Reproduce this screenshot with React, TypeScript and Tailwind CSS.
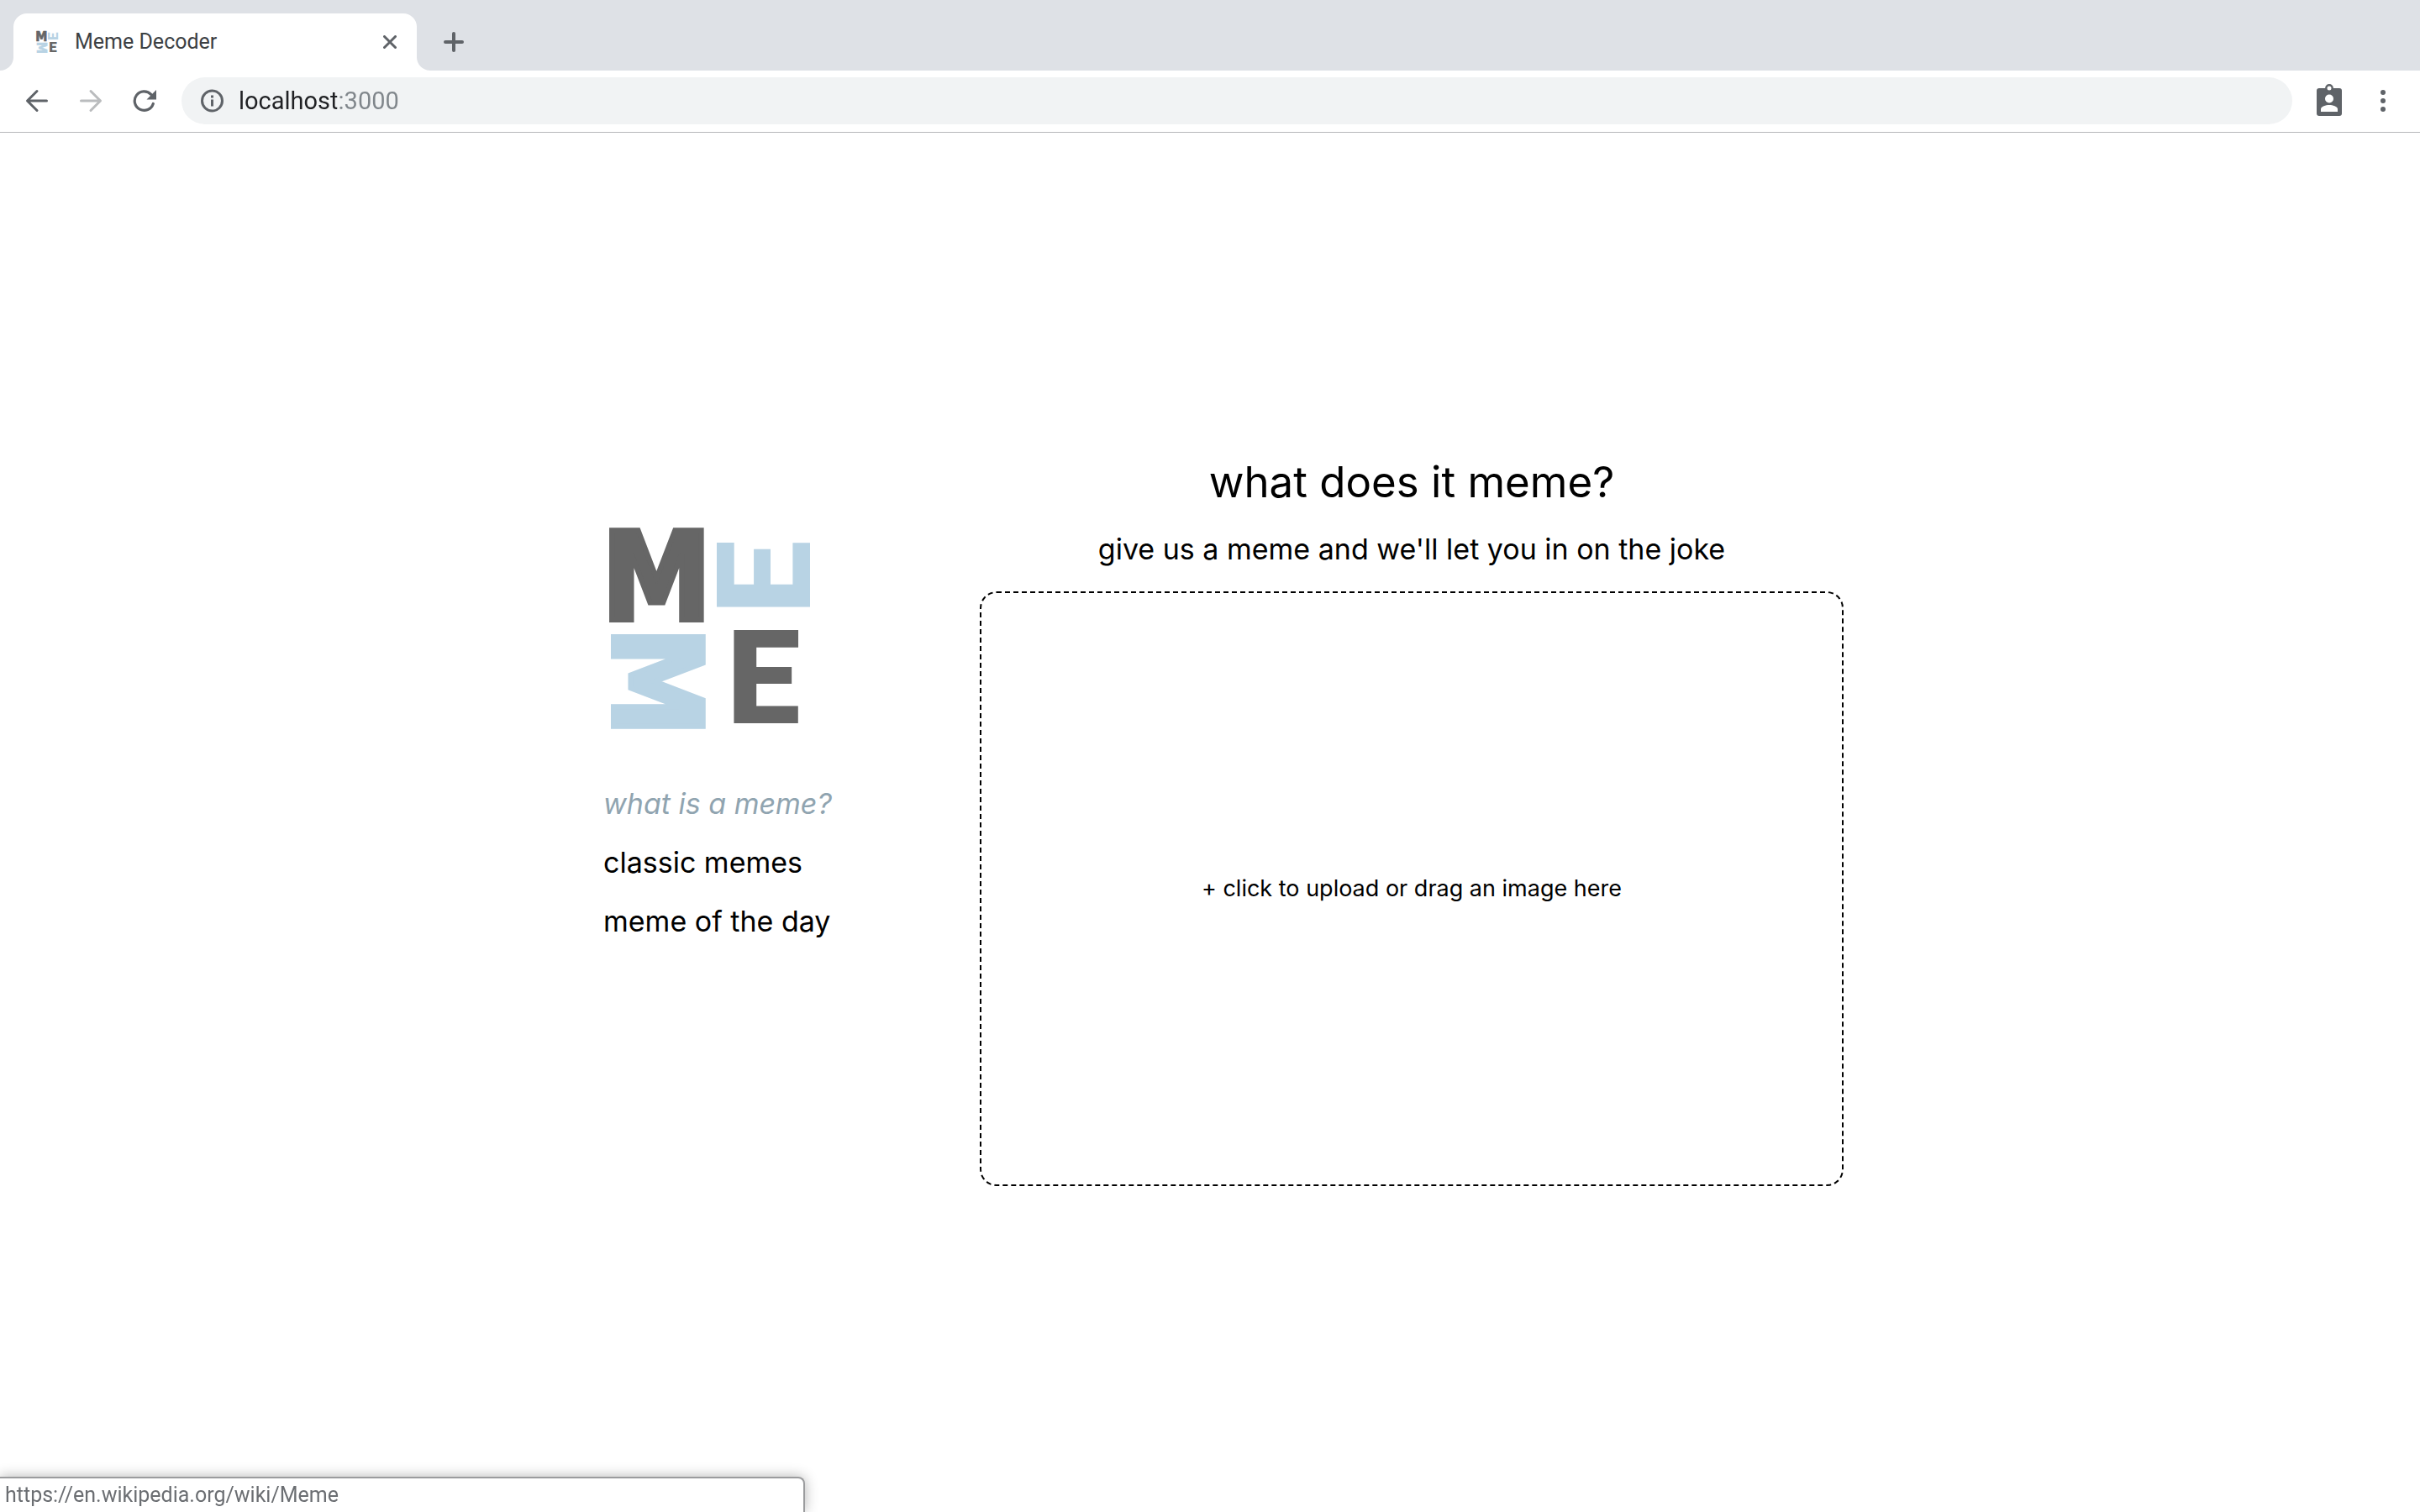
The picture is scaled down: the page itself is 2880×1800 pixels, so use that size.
import { useRef, useState } from 'react';

const links = [
  { label: 'what is a meme?', href: 'https://en.wikipedia.org/wiki/Meme', active: true },
  { label: 'classic memes', href: '#classic' },
  { label: 'meme of the day', href: '#today' },
];

function Logo({ className }: { className?: string }) {
  return (
    <svg viewBox="0 0 240 240" className={`overflow-visible ${className}`} role="img" aria-label="Meme">
      <g fontWeight="900" strokeLinejoin="miter">
        <text x="-8" y="109" fontFamily="DejaVu Sans Condensed" fontWeight="700" fontSize="146" fill="#666" stroke="#666" strokeWidth="6">M</text>
        <text transform="translate(240 96) rotate(-90)" x="-6" y="0" fontFamily="Roboto" fontSize="156" fill="#b8d3e4">E</text>
        <text transform="translate(6 128) rotate(90)" x="-11" y="0" fontFamily="DejaVu Sans Condensed" fontWeight="700" fontSize="146" fill="#b8d3e4" stroke="#b8d3e4" strokeWidth="6">M</text>
        <text x="141" y="232" fontFamily="Roboto" fontSize="156" fill="#666">E</text>
      </g>
    </svg>
  );
}

function TabStrip() {
  return (
    <div className="flex bg-[#dee1e6] pt-4">
      <div className="w-4 bg-white">
        <div className="h-full rounded-br-2xl bg-[#dee1e6]"></div>
      </div>
      <div className="flex h-[68px] w-[480px] items-center rounded-t-2xl bg-white pl-6 pr-4">
        <Logo className="ml-[3px] h-[26px] w-[26px]" />
        <span className="ml-5 flex-1 text-[25px] leading-8 text-[#3c4043]">Meme Decoder</span>
        <button aria-label="Close tab" className="flex h-8 w-8 items-center justify-center">
          <svg viewBox="0 0 16 16" className="h-4 w-4" fill="none" stroke="#5f6368" strokeWidth="3" strokeLinecap="round">
            <path d="M1.5 1.5l13 13M14.5 1.5l-13 13" />
          </svg>
        </button>
      </div>
      <div className="w-4 bg-white">
        <div className="h-full rounded-bl-2xl bg-[#dee1e6]"></div>
      </div>
      <button aria-label="New tab" className="flex h-[68px] w-14 items-center justify-center">
        <svg viewBox="0 0 24 24" className="h-6 w-6" fill="none" stroke="#5f6368" strokeWidth="4" strokeLinecap="round">
          <path d="M12 2v20M2 12h20" />
        </svg>
      </button>
    </div>
  );
}

function Toolbar() {
  const button = 'flex h-14 w-16 items-center justify-center';

  return (
    <div className="flex border-b border-[#b6b7b9] bg-white px-3 pb-[9px] pt-2">
      <button aria-label="Back" className={button}>
        <svg viewBox="0 0 28 28" className="h-7 w-7" fill="none" stroke="#5f6368" strokeWidth="3" strokeLinecap="round" strokeLinejoin="round">
          <path d="M25.500 14H3M14 2.500L2.500 14 14 25.500" />
        </svg>
      </button>
      <button aria-label="Forward" disabled className={button}>
        <svg viewBox="0 0 28 28" className="h-7 w-7" fill="none" stroke="#babcbe" strokeWidth="3" strokeLinecap="round" strokeLinejoin="round">
          <path d="M2.500 14H25M14 2.500L25.500 14 14 25.500" />
        </svg>
      </button>
      <button aria-label="Reload" className={button}>
        <svg viewBox="0 0 28 28" className="h-7 w-7">
          <path d="M24.300 17.500A11.300 11.300 0 1 1 21.700 6.300" fill="none" stroke="#5f6368" strokeWidth="3.200" strokeLinecap="round" />
          <path d="M28 1v11.500H16.500z" fill="#5f6368" />
        </svg>
      </button>
      <div className="mx-3 flex flex-1 items-center rounded-full bg-[#f1f3f4] pl-[22px] pr-6">
        <svg viewBox="0 0 28 28" className="h-7 w-7" fill="none" stroke="#5f6368" strokeWidth="3">
          <circle cx="14.500" cy="14" r="12" />
          <path d="M14.500 12.500v8M14.500 7.500v3" />
        </svg>
        <input
          type="text"
          aria-label="Address"
          defaultValue="localhost:3000"
          className="ml-[18px] flex-1 bg-[linear-gradient(90deg,#202124_117px,#80868b_117px)] bg-clip-text text-[29px] leading-10 text-transparent outline-none"
        />
      </div>
      <button aria-label="Profile" className={button}>
        <svg viewBox="0 0 32 40" className="h-10 w-8">
          <rect x="1" y="5" width="30" height="33" rx="3" fill="#5f6368" />
          <circle cx="16" cy="5" r="3.700" fill="#fff" stroke="#5f6368" strokeWidth="2.400" />
          <circle cx="16" cy="17.500" r="5" fill="#fff" />
          <path d="M6 33v-3c0-3.500 6-5 10-5s10 1.500 10 5v3z" fill="#fff" />
        </svg>
      </button>
      <button aria-label="Menu" className={button}>
        <svg viewBox="0 0 28 28" className="h-7 w-7" fill="#5f6368">
          <circle cx="14" cy="4" r="3" />
          <circle cx="14" cy="14" r="3" />
          <circle cx="14" cy="24" r="3" />
        </svg>
      </button>
    </div>
  );
}

function Uploader() {
  const fileInputRef = useRef<HTMLInputElement>(null);
  const [fileName, setFileName] = useState('');

  return (
    <>
      <button
        onClick={() => fileInputRef.current?.click()}
        onDragOver={(e) => e.preventDefault()}
        onDrop={(e) => {
          e.preventDefault();
          setFileName(e.dataTransfer.files[0]?.name ?? '');
        }}
        className="mt-[30px] flex h-[708px] w-full items-center justify-center rounded-[20px] border-2 border-dashed border-black text-[27px]"
      >
        {fileName || '+ click to upload or drag an image here'}
      </button>
      <input
        ref={fileInputRef}
        type="file"
        accept="image/*"
        aria-label="Meme image"
        className="hidden"
        onChange={(e) => setFileName(e.target.files?.[0]?.name ?? '')}
      />
    </>
  );
}

export default function App() {
  return (
    <div className="flex min-h-screen flex-col bg-white font-[Roboto,sans-serif]">
      <header>
        <TabStrip />
        <Toolbar />
      </header>
      <main className="flex flex-1 items-center justify-center pb-[2px] font-[Inter,sans-serif] text-black">
        <div className="flex w-full max-w-[1508px] items-start">
          <nav className="flex-1 pl-8 pt-[85px]">
            <Logo className="ml-[6px] h-60 w-60" />
            <ul className="mt-[53px] text-[34px] leading-[70px]">
              {links.map((link) => (
                <li key={link.label}>
                  <a href={link.href} className={link.active ? 'italic text-[#90a4b0]' : ''}>
                    {link.label}
                  </a>
                </li>
              ))}
            </ul>
          </nav>
          <section className="w-[1028px] text-center">
            <h1 className="text-[51px] leading-[60px]">what does it meme?</h1>
            <p className="mt-[30px] text-[34px] leading-10">give us a meme and we'll let you in on the joke</p>
            <Uploader />
          </section>
        </div>
      </main>
      <div className="fixed bottom-0 left-0 w-[958px] rounded-tr-lg border-r-2 border-t-2 border-[#9b9c9e] bg-white px-[6px] py-1 text-[25px] leading-8 text-[#6b6e72] shadow-[0_0_16px_rgba(0,0,0,0.3)]">
        https://en.wikipedia.org/wiki/Meme
      </div>
    </div>
  );
}
